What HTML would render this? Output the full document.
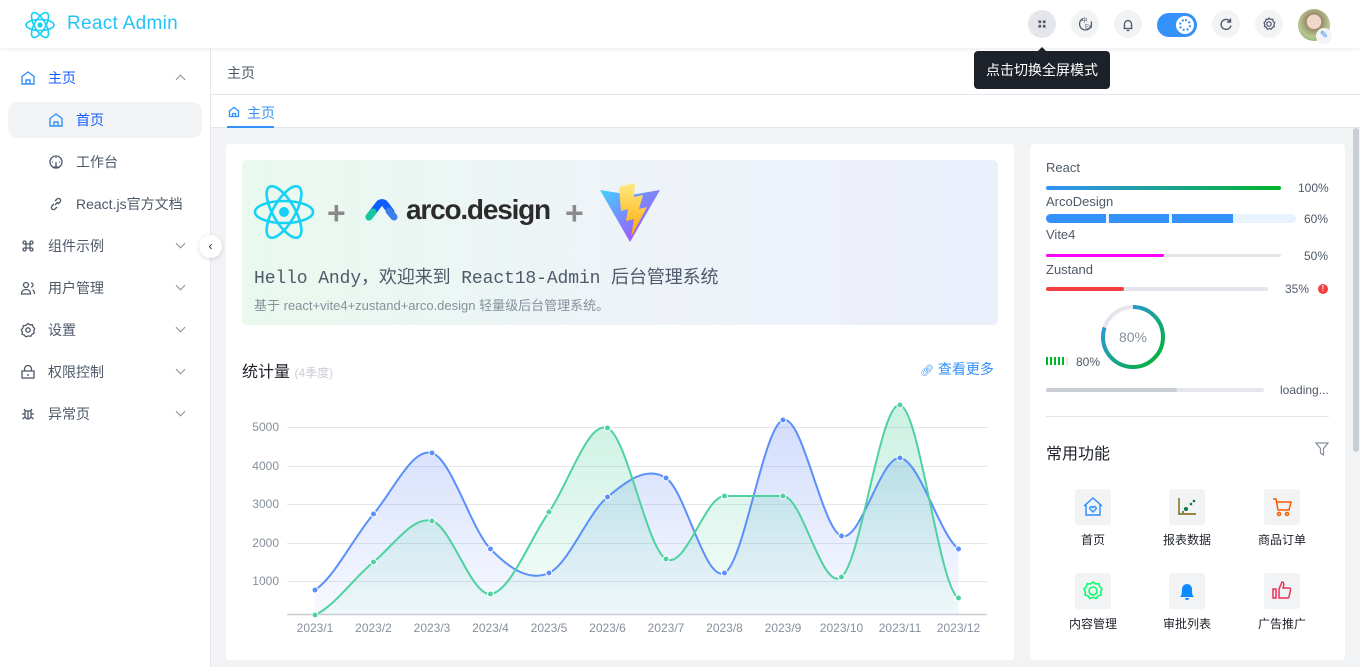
<!DOCTYPE html>
<html><head><meta charset="utf-8"><style>
*{box-sizing:border-box;margin:0;padding:0}
body{width:1360px;height:667px;overflow:hidden;font-family:"Liberation Sans","Noto Sans CJK SC",sans-serif;background:#f2f3f5;position:relative;color:#1d2129;font-size:14px}
.hdr{position:absolute;left:0;top:0;width:1360px;height:48px;background:#fff;box-shadow:0 2px 5px rgba(0,0,0,.06);z-index:3}
.side{position:absolute;left:0;top:48px;width:211px;height:619px;background:#fff;border-right:1px solid #e5e6eb}
.mi{position:absolute;left:0;width:210px;height:36px;line-height:36px;font-size:14px;color:#4e5969}
.mi .ic{position:absolute;left:20px;top:10px;width:16px;height:16px}
.mi .t{position:absolute;left:48px}
.mi .ar{position:absolute;left:177px;top:12px;width:7px;height:7px;border-right:1.3px solid #86909c;border-bottom:1.3px solid #86909c;transform:rotate(45deg)}
.sub .ic{left:48px}.sub .t{left:76px}
.btn{position:absolute;top:10px;width:28px;height:28px;border-radius:50%;background:#f2f3f5}
.card{position:absolute;background:#fff;border-radius:4px}
.pl{font-size:12px;color:#4e5969}
.bar{position:absolute;height:4px;border-radius:2px;background:#e5e6eb}
.fi{position:absolute;width:36px;height:36px;background:#f2f3f5;border-radius:3px}
.fl{position:absolute;width:80px;text-align:center;font-size:12px;color:#1d2129}
</style></head><body>
<div class="hdr">
 <svg style="position:absolute;left:24px;top:9px" width="32" height="32" viewBox="-16 -16 32 32" fill="none" stroke="#16d1f5" stroke-width="1.6"><ellipse rx="14" ry="5.5"/><ellipse rx="14" ry="5.5" transform="rotate(60)"/><ellipse rx="14" ry="5.5" transform="rotate(120)"/><circle r="2.6" fill="#16d1f5" stroke="none"/></svg>
 <div style="position:absolute;left:67px;top:13px;font-size:19px;color:#23c3f5;letter-spacing:.3px">React Admin</div>
 <div class="btn" style="left:1028px;background:#e5e6eb"><svg width="28" height="28" viewBox="0 0 28 28" stroke="#4e5969" stroke-width="1.3" fill="none"><path d="M10.5 10.5l2 2M12.5 10.5v2h-2M17.5 10.5l-2 2M15.5 10.5v2h2M10.5 17.5l2-2M10.5 15.5h2v2M17.5 17.5l-2-2M17.5 15.5h-2v2"/></svg></div>
 <div class="btn" style="left:1071px"><svg width="28" height="28" viewBox="0 0 28 28" stroke="#4e5969" stroke-width="1.2" fill="none"><path d="M12 8.5a6 6 0 108 3"/><text x="10.5" y="12.5" font-size="6" fill="#4e5969" stroke="none">中</text><text x="14" y="18.5" font-size="6" fill="#4e5969" stroke="none">En</text></svg></div>
 <div class="btn" style="left:1114px"><svg width="28" height="28" viewBox="0 0 28 28" stroke="#4e5969" stroke-width="1.3" fill="none"><path d="M9.5 18.5h9M10.5 18.5v-4.5a3.5 3.5 0 017 0v4.5M12.5 20.5h3"/></svg></div>
 <div style="position:absolute;left:1157px;top:13px;width:40px;height:24px;border-radius:12px;background:#3491fa"><div style="position:absolute;left:19px;top:3px;width:18px;height:18px;border-radius:50%;background:#fff"><div style="position:absolute;left:3px;top:3px;width:12px;height:12px;border-radius:50%;border:2.5px dotted #3491fa"></div></div></div>
 <div class="btn" style="left:1212px"><svg width="28" height="28" viewBox="0 0 28 28" stroke="#4e5969" stroke-width="1.4" fill="none"><path d="M18.5 12a5 5 0 10.5 3.5M18.5 8.5v3.5h-3.5"/></svg></div>
 <div class="btn" style="left:1255px"><svg width="28" height="28" viewBox="0 0 28 28" stroke="#4e5969" stroke-width="1.2" fill="none"><circle cx="14" cy="14" r="2.2"/><path d="M14 8l1.6 1.4 2.1-.1.4 2.1 1.7 1.3-.9 1.9.5 2-2 .7-1 1.9-2-.6-2 .6-1-1.9-2-.7.5-2-.9-1.9 1.7-1.3.4-2.1 2.1.1z"/></svg></div>
 <div style="position:absolute;left:1298px;top:9px;width:32px;height:32px;border-radius:50%;background:radial-gradient(circle at 50% 40%,#f0d8c8 0 28%,#9a8a6a 30%,#b4c890 60%,#7a9a60)"></div>
 <div style="position:absolute;left:1316px;top:28px;width:16px;height:16px;border-radius:50%;background:#f2f3f5;color:#3491fa;font-size:10px;text-align:center;line-height:16px">✎</div>
</div>
<div style="position:absolute;left:974px;top:51px;width:136px;height:38px;background:#1d2129;border-radius:4px;color:#fff;font-size:14px;line-height:38px;text-align:center;z-index:4">点击切换全屏模式</div>
<div style="position:absolute;left:1037px;top:42px;width:0;height:0;border:5px solid transparent;border-bottom-color:#1d2129;z-index:4"></div>

<div class="side">
 <div class="mi" style="top:12px;color:#165dff"><svg class="ic" viewBox="0 0 16 16" fill="none" stroke="#3491fa" stroke-width="1.4"><path d="M2 6.5L8 2l6 4.5V14H2z M6 14v-4h4v4"/></svg><span class="t">主页</span><div class="ar" style="transform:rotate(225deg);top:16px"></div></div>
 <div style="position:absolute;left:8px;top:54px;width:194px;height:36px;border-radius:10px;background:#f2f3f5"></div>
 <div class="mi sub" style="top:54px;color:#165dff"><svg class="ic" viewBox="0 0 16 16" fill="none" stroke="#3491fa" stroke-width="1.4"><path d="M2 6.5L8 2l6 4.5V14H2z M6 14v-4h4v4"/></svg><span class="t">首页</span></div>
 <div class="mi sub" style="top:96px"><svg class="ic" viewBox="0 0 16 16" fill="none" stroke="#4e5969" stroke-width="1.3"><circle cx="8" cy="8" r="6"/><path d="M8 8v5M6 13h4M8 3v1M4 8h1M11 8h1"/></svg><span class="t">工作台</span></div>
 <div class="mi sub" style="top:138px"><svg class="ic" viewBox="0 0 16 16" fill="none" stroke="#4e5969" stroke-width="1.3"><path d="M7 9l3-3M6 8l-2 2a2 2 0 003 3l2-2M10 8l2-2a2 2 0 00-3-3L7 5"/></svg><span class="t">React.js官方文档</span></div>
 <div class="mi" style="top:180px"><svg class="ic" viewBox="0 0 16 16" fill="none" stroke="#4e5969" stroke-width="1.3"><path d="M6 6h4v4H6zM6 6H4.5a1.5 1.5 0 111.5-1.5zM10 6V4.5A1.5 1.5 0 1111.5 6zM10 10h1.5a1.5 1.5 0 11-1.5 1.5zM6 10v1.5A1.5 1.5 0 114.5 10z"/></svg><span class="t">组件示例</span><div class="ar"></div></div>
 <div class="mi" style="top:222px"><svg class="ic" viewBox="0 0 16 16" fill="none" stroke="#4e5969" stroke-width="1.3"><circle cx="6" cy="5" r="2.5"/><path d="M1.5 14c0-3 2-4.5 4.5-4.5s4.5 1.5 4.5 4.5zM11 3a2 2 0 010 4M12.5 10c1.5.5 2 2 2 4"/></svg><span class="t">用户管理</span><div class="ar"></div></div>
 <div class="mi" style="top:264px"><svg class="ic" viewBox="0 0 16 16" fill="none" stroke="#4e5969" stroke-width="1.3"><circle cx="8" cy="8" r="2.2"/><path d="M8 1.5l2 1.3 2.3-.1.8 2.2 1.6 1.7-.9 2.2.3 2.3-2 1.1-1.2 2L8 14l-2.2.8-1.5-1.8-2.2-.7.2-2.4-1-2.1 1.6-1.8.4-2.3 2.3-.2z"/></svg><span class="t">设置</span><div class="ar"></div></div>
 <div class="mi" style="top:306px"><svg class="ic" viewBox="0 0 16 16" fill="none" stroke="#4e5969" stroke-width="1.3"><rect x="2" y="7" width="12" height="7"/><path d="M4.5 7V5a3.5 3.5 0 017 0v2M8 10v2"/></svg><span class="t">权限控制</span><div class="ar"></div></div>
 <div class="mi" style="top:348px"><svg class="ic" viewBox="0 0 16 16" fill="none" stroke="#4e5969" stroke-width="1.3"><path d="M5 5h6v5a3 3 0 01-6 0zM8 5v8M5 8H2M11 8h3M5 11l-2.5 2M11 11l2.5 2M5.5 5L4 3M10.5 5L12 3"/></svg><span class="t">异常页</span><div class="ar"></div></div>
</div>
<div style="position:absolute;left:199px;top:235px;width:23px;height:23px;border-radius:50%;background:#fff;box-shadow:0 1px 4px rgba(0,0,0,.15);z-index:2;font-size:12px;text-align:center;line-height:22px;color:#1d2129">‹</div>

<div style="position:absolute;left:211px;top:48px;width:1149px;height:80px;background:#fff"></div>
<div style="position:absolute;left:211px;top:94px;width:1149px;height:1px;background:#e5e6eb"></div>
<div style="position:absolute;left:211px;top:127px;width:1149px;height:1px;background:#e5e6eb"></div>
<div style="position:absolute;left:227px;top:63px;font-size:14px;color:#4e5969">主页</div>
<svg style="position:absolute;left:228px;top:106px" width="12" height="12" viewBox="0 0 16 16" fill="none" stroke="#3491fa" stroke-width="1.8"><path d="M2 6.5L8 2l6 4.5V14H2z M6 14v-4h4v4"/></svg>
<div style="position:absolute;left:247px;top:103px;font-size:14px;color:#3491fa">主页</div>
<div style="position:absolute;left:227px;top:126px;width:47px;height:2px;background:#3491fa"></div>
<div style="position:absolute;left:1352px;top:128px;width:8px;height:539px;background:#f2f3f5"><div style="margin:0 1px;height:324px;background:#c9cdd4;border-radius:4px"></div></div>

<div class="card" style="left:226px;top:144px;width:788px;height:516px"></div>
<div style="position:absolute;left:242px;top:160px;width:756px;height:165px;border-radius:5px;background:linear-gradient(90deg,#e9f9ee,#eef3f8 50%,#eceffc)"></div>
<svg style="position:absolute;left:253px;top:182px" width="62" height="60" viewBox="-31 -30 62 60" fill="none" stroke="#16d1f5" stroke-width="2.6"><ellipse rx="29" ry="11"/><ellipse rx="29" ry="11" transform="rotate(60)"/><ellipse rx="29" ry="11" transform="rotate(120)"/><circle r="5" fill="#16d1f5" stroke="none"/></svg>
<div style="position:absolute;left:327px;top:195px;font-size:32px;color:#8a8a8a;font-weight:bold">+</div>
<svg style="position:absolute;left:365px;top:199px" width="36" height="26" viewBox="0 0 36 26"><path d="M4 18L14 5a4 4 0 016 0l6 8" stroke="#0e5dff" stroke-width="7" stroke-linecap="round" fill="none"/><path d="M4 18l4-5" stroke="#14c9a0" stroke-width="7" stroke-linecap="round"/><path d="M24 12l5 6" stroke="#3c7ef0" stroke-width="7" stroke-linecap="round"/></svg>
<div style="position:absolute;left:406px;top:194px;font-size:28px;font-weight:bold;color:#2b2b2b;letter-spacing:-1.2px">arco.design</div>
<div style="position:absolute;left:565px;top:195px;font-size:32px;color:#8a8a8a;font-weight:bold">+</div>
<svg style="position:absolute;left:599px;top:182px" width="62" height="62" viewBox="0 0 62 62"><defs><linearGradient id="vg" x1="0" y1="0" x2="1" y2="1"><stop offset="0" stop-color="#41d1ff"/><stop offset="1" stop-color="#bd34fe"/></linearGradient><linearGradient id="vy" x1="0" y1="0" x2="0" y2="1"><stop offset="0" stop-color="#ffea83"/><stop offset="1" stop-color="#ffa800"/></linearGradient></defs><path d="M1 8l30 52L61 8 32 13z" fill="url(#vg)"/><path d="M36 1L20 5l2 24 7-2-2 12 8-2-3 18 16-30-8 2 4-14-9 2z" fill="url(#vy)"/></svg>
<div style="position:absolute;left:254px;top:263px;font-family:'Liberation Mono','Noto Sans CJK SC',monospace;font-size:18px;color:#4e5969;letter-spacing:-.1px">Hello Andy，欢迎来到 React18-Admin 后台管理系统</div>
<div style="position:absolute;left:254px;top:295px;font-size:13px;color:#86909c">基于 react+vite4+zustand+arco.design 轻量级后台管理系统。</div>

<div style="position:absolute;left:242px;top:358px;font-size:16px;color:#1d2129">统计量 <span style="font-size:12px;color:#c9cdd4">(4季度)</span></div>
<div style="position:absolute;left:920px;top:359px;font-size:14px;color:#3491fa"><span style="font-size:11px">🔗︎</span> 查看更多</div>

<svg style="position:absolute;left:226px;top:390px" width="788" height="250" viewBox="226 390 788 250" font-family="Liberation Sans" font-size="12" fill="#86909c">
<defs><linearGradient id="gb" x1="0" y1="0" x2="0" y2="1"><stop offset="0" stop-color="#6b8ef7" stop-opacity=".3"/><stop offset="1" stop-color="#6b8ef7" stop-opacity=".05"/></linearGradient><linearGradient id="gg" x1="0" y1="0" x2="0" y2="1"><stop offset="0" stop-color="#4fd1a0" stop-opacity=".3"/><stop offset="1" stop-color="#4fd1a0" stop-opacity=".05"/></linearGradient></defs>
<g stroke="#e5e6eb" stroke-width="1"><path d="M287 427.5H987M287 466.5H987M287 504.5H987M287 543.5H987M287 581.5H987"/></g>
<path d="M287 614.5H987" stroke="#c9cdd4" stroke-width="1.5"/>
<g text-anchor="end"><text x="279" y="431">5000</text><text x="279" y="470">4000</text><text x="279" y="508">3000</text><text x="279" y="547">2000</text><text x="279" y="585">1000</text></g>
<g text-anchor="middle"><text x="315" y="632">2023/1</text><text x="373.5" y="632">2023/2</text><text x="432" y="632">2023/3</text><text x="490.5" y="632">2023/4</text><text x="549" y="632">2023/5</text><text x="607.5" y="632">2023/6</text><text x="666" y="632">2023/7</text><text x="724.5" y="632">2023/8</text><text x="783" y="632">2023/9</text><text x="841.5" y="632">2023/10</text><text x="900" y="632">2023/11</text><text x="958.5" y="632">2023/12</text></g>
<path d="M315,590 C334.5,577.3 354,536.8 373.5,514 C393,491.2 412.5,447.2 432,453 C451.5,458.8 471,529 490.5,549 C510,569 529.5,581.7 549,573 C568.5,564.3 588,512.8 607.5,497 C627,481.2 646.5,465.3 666,478 C685.5,490.7 705,582.7 724.5,573 C744,563.3 763.5,426.2 783,420 C802.5,413.8 822,529.7 841.5,536 C861,542.3 880.5,455.8 900,458 C919.5,460.2 939,533.8 958.5,549 L958.5,614 L315,614Z" fill="url(#gb)"/>
<path d="M315,615 C334.5,606.2 354,577.7 373.5,562 C393,546.3 412.5,515.7 432,521 C451.5,526.3 471,595.5 490.5,594 C510,592.5 529.5,539.7 549,512 C568.5,484.3 588,420.2 607.5,428 C627,435.8 646.5,547.7 666,559 C685.5,570.3 705,496 724.5,496 C744,496 763.5,496 783,496 C802.5,496 822,592.2 841.5,577 C861,561.8 880.5,401.5 900,405 C919.5,408.5 939,588 958.5,598 L958.5,614 L315,614Z" fill="url(#gg)"/>
<path d="M315,590 C334.5,577.3 354,536.8 373.5,514 C393,491.2 412.5,447.2 432,453 C451.5,458.8 471,529 490.5,549 C510,569 529.5,581.7 549,573 C568.5,564.3 588,512.8 607.5,497 C627,481.2 646.5,465.3 666,478 C685.5,490.7 705,582.7 724.5,573 C744,563.3 763.5,426.2 783,420 C802.5,413.8 822,529.7 841.5,536 C861,542.3 880.5,455.8 900,458 C919.5,460.2 939,533.8 958.5,549" fill="none" stroke="#5b8ff9" stroke-width="2"/>
<path d="M315,615 C334.5,606.2 354,577.7 373.5,562 C393,546.3 412.5,515.7 432,521 C451.5,526.3 471,595.5 490.5,594 C510,592.5 529.5,539.7 549,512 C568.5,484.3 588,420.2 607.5,428 C627,435.8 646.5,547.7 666,559 C685.5,570.3 705,496 724.5,496 C744,496 763.5,496 783,496 C802.5,496 822,592.2 841.5,577 C861,561.8 880.5,401.5 900,405 C919.5,408.5 939,588 958.5,598" fill="none" stroke="#4fd1a0" stroke-width="2"/>
<g fill="#5b8ff9" stroke="#fff" stroke-width="1"><circle cx="315" cy="590" r="3"/><circle cx="373.5" cy="514" r="3"/><circle cx="432" cy="453" r="3"/><circle cx="490.5" cy="549" r="3"/><circle cx="549" cy="573" r="3"/><circle cx="607.5" cy="497" r="3"/><circle cx="666" cy="478" r="3"/><circle cx="724.5" cy="573" r="3"/><circle cx="783" cy="420" r="3"/><circle cx="841.5" cy="536" r="3"/><circle cx="900" cy="458" r="3"/><circle cx="958.5" cy="549" r="3"/></g>
<g fill="#4fd1a0" stroke="#fff" stroke-width="1"><circle cx="315" cy="615" r="3"/><circle cx="373.5" cy="562" r="3"/><circle cx="432" cy="521" r="3"/><circle cx="490.5" cy="594" r="3"/><circle cx="549" cy="512" r="3"/><circle cx="607.5" cy="428" r="3"/><circle cx="666" cy="559" r="3"/><circle cx="724.5" cy="496" r="3"/><circle cx="783" cy="496" r="3"/><circle cx="841.5" cy="577" r="3"/><circle cx="900" cy="405" r="3"/><circle cx="958.5" cy="598" r="3"/></g>
</svg>

<div class="card" style="left:1030px;top:144px;width:315px;height:516px"></div>
<div style="position:absolute;left:1046px;top:160px;font-size:13px;color:#4e5969">React</div>
<div class="bar" style="left:1046px;top:186px;width:235px;background:linear-gradient(90deg,#3491fa,#00b42a)"></div>
<div class="pl" style="position:absolute;left:1298px;top:181px">100%</div>
<div style="position:absolute;left:1046px;top:194px;font-size:13px;color:#4e5969">ArcoDesign</div>
<div style="position:absolute;left:1046px;top:214px;width:250px;height:9px;border-radius:5px;background:#e8f3ff;overflow:hidden"><div style="position:absolute;left:0;width:60px;height:9px;background:#3491fa"></div><div style="position:absolute;left:63px;width:60px;height:9px;background:#3491fa"></div><div style="position:absolute;left:126px;width:61px;height:9px;background:#3491fa"></div></div>
<div class="pl" style="position:absolute;left:1304px;top:212px">60%</div>
<div style="position:absolute;left:1046px;top:227px;font-size:13px;color:#4e5969">Vite4</div>
<div class="bar" style="left:1046px;top:254px;width:235px;height:3px"><div style="width:50%;height:3px;background:#f0f;border-radius:2px"></div></div>
<div class="pl" style="position:absolute;left:1304px;top:249px">50%</div>
<div style="position:absolute;left:1046px;top:262px;font-size:13px;color:#4e5969">Zustand</div>
<div class="bar" style="left:1046px;top:287px;width:222px"><div style="width:35%;height:4px;background:#f53f3f;border-radius:2px"></div></div>
<div class="pl" style="position:absolute;left:1285px;top:282px">35%</div>
<div style="position:absolute;left:1318px;top:284px;width:10px;height:10px;border-radius:50%;background:#f53f3f;color:#fff;font-size:8px;text-align:center;line-height:10px;font-weight:bold">!</div>
<svg style="position:absolute;left:1100px;top:304px" width="66" height="66" viewBox="0 0 66 66"><defs><linearGradient id="cg" x1="1" y1="0" x2="0" y2="1"><stop offset="0" stop-color="#3491fa"/><stop offset="1" stop-color="#00b42a"/></linearGradient></defs><circle cx="33" cy="33" r="30" fill="none" stroke="#e5e6eb" stroke-width="4"/><circle cx="33" cy="33" r="30" fill="none" stroke="url(#cg)" stroke-width="4" stroke-dasharray="150.8 188.5" transform="rotate(-90 33 33)"/><text x="33" y="38" text-anchor="middle" font-size="14" fill="#86909c" font-family="Liberation Sans">80%</text></svg>
<div style="position:absolute;left:1046px;top:357px;width:22px;height:8px;background:repeating-linear-gradient(90deg,#00b42a 0 2px,transparent 2px 4px)"></div>
<div style="position:absolute;left:1066px;top:357px;width:2px;height:8px;background:#e5e6eb"></div>
<div class="pl" style="position:absolute;left:1076px;top:355px">80%</div>
<div class="bar" style="left:1046px;top:388px;width:218px"><div style="width:60%;height:4px;background:#c9cdd4;border-radius:2px"></div></div>
<div class="pl" style="position:absolute;left:1280px;top:383px">loading...</div>
<div style="position:absolute;left:1046px;top:416px;width:283px;height:1px;background:#e5e6eb"></div>
<div style="position:absolute;left:1046px;top:440px;font-size:16px;color:#1d2129">常用功能</div>
<svg style="position:absolute;left:1315px;top:442px" width="14" height="14" viewBox="0 0 14 14" fill="none" stroke="#86909c" stroke-width="1.2"><path d="M1 1h12L8.5 6.5V13L5.5 11V6.5z"/></svg>
<div class="fi" style="left:1075px;top:489px"><svg width="36" height="36" viewBox="0 0 36 36" fill="none" stroke="#2a8cff" stroke-width="1.4"><path d="M9 17l9-8 9 8M11 15v11h14V15"/><path d="M18 23l-3-3a1.5 1.5 0 013-1.5 1.5 1.5 0 013 1.5z"/></svg></div>
<div class="fl" style="left:1053px;top:531px">首页</div>
<div class="fi" style="left:1169px;top:489px"><svg width="36" height="36" viewBox="0 0 36 36"><path d="M10 9v16h17" stroke="#7a6000" stroke-width="1.4" fill="none"/><circle cx="17" cy="20" r="2" fill="#0a7a3a"/><circle cx="22" cy="15" r="1.3" fill="#0a7a3a"/><circle cx="25" cy="12" r="1.3" fill="#0a7a3a"/><circle cx="14" cy="23" r="1" fill="#0a7a3a"/></svg></div>
<div class="fl" style="left:1147px;top:531px">报表数据</div>
<div class="fi" style="left:1264px;top:489px"><svg width="36" height="36" viewBox="0 0 36 36" fill="none" stroke="#ff5a00" stroke-width="1.5"><path d="M9 10h3l2 11h11l2-8H13"/><circle cx="15" cy="25" r="1.5"/><circle cx="23" cy="25" r="1.5"/></svg></div>
<div class="fl" style="left:1242px;top:531px">商品订单</div>
<div class="fi" style="left:1075px;top:573px"><svg width="36" height="36" viewBox="0 0 36 36" fill="none" stroke="#00ff66" stroke-width="1.5"><circle cx="18" cy="18" r="4"/><path d="M18 9l2.5 2 3.2-.3 1 3 2.3 2.3-1.3 2.9.3 3.1-3 1-2 2.5-3-1.2-3 1.2-2-2.5-3-1 .3-3.1-1.3-2.9 2.3-2.3 1-3 3.2.3z"/></svg></div>
<div class="fl" style="left:1053px;top:615px">内容管理</div>
<div class="fi" style="left:1169px;top:573px"><svg width="36" height="36" viewBox="0 0 36 36"><path d="M11 24c2-2 2-4 2-8a5 5 0 0110 0c0 4 0 6 2 8z M16 25a2 2 0 004 0" fill="#0a8cff"/></svg></div>
<div class="fl" style="left:1147px;top:615px">审批列表</div>
<div class="fi" style="left:1264px;top:573px"><svg width="36" height="36" viewBox="0 0 36 36" fill="none" stroke="#e8325a" stroke-width="1.5"><rect x="9" y="16" width="3" height="9"/><path d="M15 16l3-7c2 0 2 2 1.5 4l-.5 2h6a1.5 1.5 0 011.5 2l-1.5 7a1.5 1.5 0 01-1.5 1H15z"/></svg></div>
<div class="fl" style="left:1242px;top:615px">广告推广</div>
</body></html>
